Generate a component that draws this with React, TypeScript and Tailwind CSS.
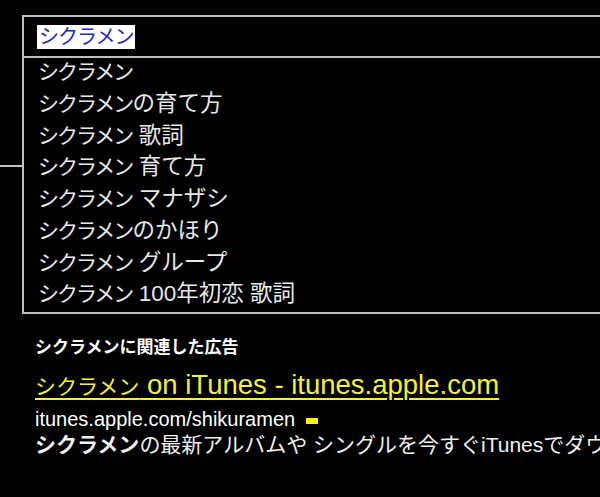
const SUGGESTIONS = [
  '',
  'の育て方',
  ' 歌詞',
  ' 育て方',
  ' マナザシ',
  'のかほり',
  ' グループ',
  ' 100年初恋 歌詞',
]

const FONT = "font-['Liberation_Sans','Noto_Sans_CJK_JP',sans-serif]"

export default function App() {
  return (
    <div className={`relative h-[497px] w-[600px] overflow-hidden bg-black text-white ${FONT}`}>
      {/* connector line on the left */}
      <div className="absolute left-0 top-[165px] h-[2px] w-[22px] bg-[#c0c0c0]" />

      <div className="pt-[15px] pl-[22px]">
        <div className="w-[620px] border-2 border-[#c0c0c0]">
          {/* query box */}
          <div className="flex h-[39px] items-center pl-[13px] pt-[1px]">
            <span className="bg-white px-[2px] text-[20px] leading-[24px] tracking-[-1px] text-[#2626c8]">シクラメン</span>
          </div>

          {/* suggestions */}
          <div className="border-t-2 border-[#c0c0c0]">
            {SUGGESTIONS.map((s) => (
              <div key={s} className="flex h-[31.75px] items-center whitespace-pre pb-[4px] pl-[14px] text-[21px] text-[#e8e8e8]">
                <span className="tracking-[-2px]">シクラメン</span>
                <span className="text-[22.5px]">{s}</span>
              </div>
            ))}
          </div>
        </div>
      </div>

      {/* ads */}
      <div className="mt-[23px] pl-[35px]">
        <div className="text-[17px] font-bold leading-[22px] text-white">シクラメンに関連した広告</div>
        <a className="mt-[12px] block whitespace-nowrap text-[21px] leading-[28px] text-[#f2f230] underline decoration-2 underline-offset-[4px]">
          シクラメン<span className="text-[27.5px]"> on iTunes - itunes.apple.com</span>
        </a>
        <div className="mt-[6px] flex items-center whitespace-nowrap text-[20px] leading-[24px] text-white">
          itunes.apple.com/shikuramen
          <span className="ml-[11px] mt-[3px] inline-block h-[6px] w-[12px] bg-[#ffee00]" />
        </div>
        <div className="whitespace-nowrap text-[21px] leading-[27px] text-[#f0f0f0]">
          <span className="font-bold">シクラメン</span>の最新アルバムや シングルを今すぐiTunesでダウンロード
        </div>
      </div>
    </div>
  )
}
